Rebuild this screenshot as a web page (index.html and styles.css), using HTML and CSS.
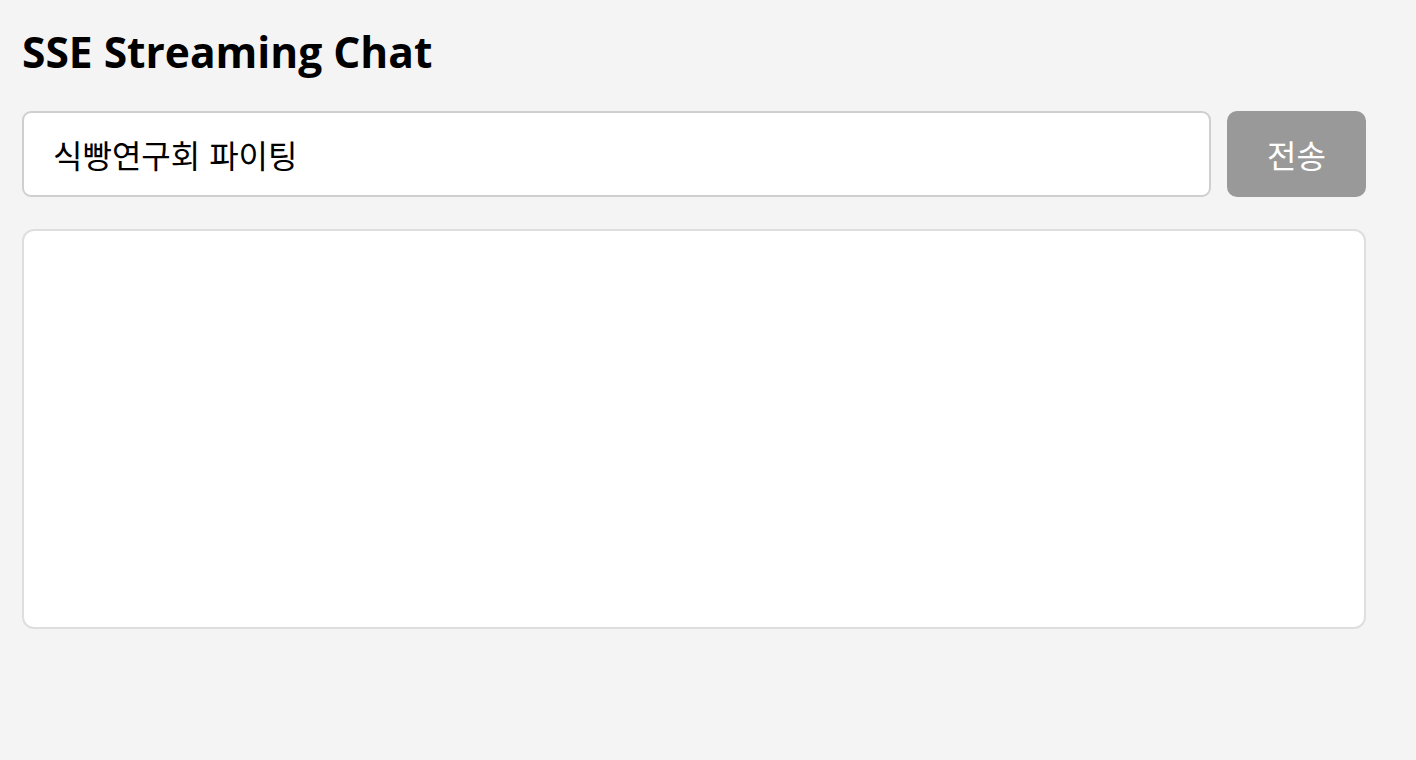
FILE: index.html
```html
<!DOCTYPE html>
<html lang="ko">
<head>
<meta charset="utf-8">
<title>SSE Streaming Chat</title>
<link rel="stylesheet" href="styles.css">
</head>
<body>
<main class="app">
  <h1 class="title">SSE Streaming Chat</h1>
  <form class="composer">
    <input class="prompt" type="text" value="식빵연구회 파이팅">
    <button class="send" type="button">전송</button>
  </form>
  <div class="output"></div>
</main>
</body>
</html>
```
FILE: styles.css
```css
html, body {
  margin: 0;
  padding: 0;
  background: #f4f4f4;
}
body {
  font-family: "Open Sans", "Noto Sans CJK KR", sans-serif;
  color: #000;
}
.app {
  width: 1344px;
  padding: 22px 0 0 22px;
}
.title {
  margin: 0;
  font-size: 42.5px;
  font-weight: 700;
  line-height: 60px;
  height: 60px;
  letter-spacing: 0;
}
.composer {
  display: flex;
  gap: 16px;
  margin-top: 29px;
}
.prompt {
  flex: 1;
  height: 86px;
  box-sizing: border-box;
  border: 2px solid #cfcfcf;
  border-radius: 9px;
  background: #fff;
  padding: 0 29px;
  font-family: "Noto Sans CJK KR", sans-serif;
  font-size: 32px;
  color: #000;
  outline: none;
}
.send {
  width: 139px;
  height: 86px;
  border: none;
  border-radius: 10px;
  background: #999;
  color: #fff;
  font-family: "Noto Sans CJK KR", sans-serif;
  font-size: 32px;
  padding: 0;
}
.output {
  margin-top: 32px;
  height: 400px;
  box-sizing: border-box;
  border: 2px solid #dedede;
  border-radius: 12px;
  background: #fff;
}
```
